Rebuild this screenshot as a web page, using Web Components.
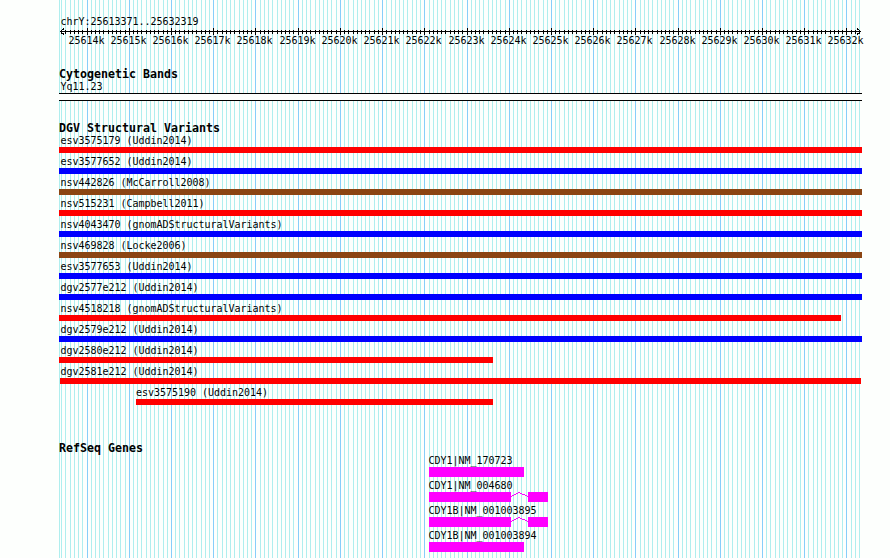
<!DOCTYPE html>
<html lang="en">
<head>
<meta charset="utf-8">
<title>chrY:25613371..25632319</title>
<style>
  body {
    margin: 0;
    background: #fdfffd;
  }
</style>
</head>
<body>
<genome-panel start="25613371" end="25632319">
  <scale-ruler start="25613371" end="25632319"></scale-ruler>
  <track-section heading="Cytogenetic Bands" style="--top: 21px">
    <cyto-band name="Yq11.23"></cyto-band>
  </track-section>
  <track-section heading="DGV Structural Variants" style="--top: 21px" id="variants"></track-section>
  <track-section heading="RefSeq Genes" style="--top: 34px" id="genes"></track-section>
</genome-panel>

<script>
  const PAD = 60;
  const WIDTH = 800;
  const SVG_NS = "http://www.w3.org/2000/svg";

  // base position -> pixel column of the panel
  function toPixel(pos, start, end) {
    return Math.round(PAD + (pos - start) * WIDTH / (end - start + 1));
  }

  function addRect(svg, x, y, width, height, fill) {
    const rect = document.createElementNS(SVG_NS, "rect");
    rect.setAttribute("x", x);
    rect.setAttribute("y", y);
    rect.setAttribute("width", width);
    rect.setAttribute("height", height);
    rect.setAttribute("fill", fill);
    svg.appendChild(rect);
  }

  class GenomePanel extends HTMLElement {
    constructor() {
      super();
      this.attachShadow({ mode: "open" });
    }

    connectedCallback() {
      this.shadowRoot.innerHTML = `
        <style>
          :host {
            display: block;
            position: relative;
            width: 890px;
            height: 558px;
            overflow: hidden;
            color: #000;
            font: 10px/12px "DejaVu Sans Mono", monospace;
            letter-spacing: -0.02px;
          }
          svg {
            position: absolute;
            inset: 0;
          }
          .tracks {
            position: relative;
            display: flex;
            flex-direction: column;
            padding: 16px 0 0 59px;
          }
        </style>
        <svg width="890" height="558" shape-rendering="crispEdges"></svg>
        <div class="tracks"><slot></slot></div>
      `;
      this.drawGrid(this.shadowRoot.querySelector("svg"));
    }

    drawGrid(svg) {
      const start = Number(this.getAttribute("start"));
      const end = Number(this.getAttribute("end"));
      addRect(svg, 59, 0, 1, 558, "#afeeee");
      for (let pos = Math.ceil(start / 100) * 100; pos <= end; pos += 100) {
        const major = pos % 1000 === 0;
        addRect(svg, toPixel(pos, start, end), 0, 1, 558, major ? "#87cefa" : "#afeeee");
      }
    }
  }

  class ScaleRuler extends HTMLElement {
    constructor() {
      super();
      this.attachShadow({ mode: "open" });
    }

    connectedCallback() {
      const start = Number(this.getAttribute("start"));
      const end = Number(this.getAttribute("end"));
      this.shadowRoot.innerHTML = `
        <style>
          :host {
            display: block;
            height: 31px;
          }
          .range {
            height: 11px;
            padding-left: 1.5px;
          }
          svg {
            display: block;
          }
          .labels {
            position: relative;
            margin-top: -1px;
          }
          .labels span {
            position: absolute;
            top: 0;
            white-space: pre;
          }
        </style>
        <div class="range">chrY:${start}..${end}</div>
        <svg width="804" height="9" shape-rendering="crispEdges">
          <path d="M1 4.5H802M5 1.5L1.5 4.5L5 7.5M798 1.5L801.5 4.5L798 7.5" fill="none" stroke="#000"/>
        </svg>
        <div class="labels"></div>
      `;
      const svg = this.shadowRoot.querySelector("svg");
      const labels = this.shadowRoot.querySelector(".labels");
      for (let pos = Math.ceil(start / 100) * 100; pos <= end; pos += 100) {
        const x = toPixel(pos, start, end) - 59;
        if (pos % 1000 === 0) {
          addRect(svg, x, 1, 1, 7, "#000");
          const label = document.createElement("span");
          label.textContent = pos / 1000 + "k";
          label.style.left = x - 18.5 + "px";
          labels.appendChild(label);
        } else {
          addRect(svg, x, 3, 1, 4, "#000");
        }
      }
    }
  }

  class TrackSection extends HTMLElement {
    constructor() {
      super();
      this.attachShadow({ mode: "open" });
    }

    connectedCallback() {
      this.shadowRoot.innerHTML = `
        <style>
          :host {
            display: block;
            margin-top: var(--top);
          }
          h2 {
            margin: 0 0 1px;
            height: 12px;
            font: bold 11.63px/12px "DejaVu Sans Mono", monospace;
            letter-spacing: 0;
          }
        </style>
        <h2>${this.getAttribute("heading")}</h2>
        <slot></slot>
      `;
    }
  }

  class CytoBand extends HTMLElement {
    constructor() {
      super();
      this.attachShadow({ mode: "open" });
    }

    connectedCallback() {
      this.shadowRoot.innerHTML = `
        <style>
          :host {
            display: block;
            width: 803px;
          }
          .name {
            height: 12px;
            padding-left: 1.5px;
          }
          .band {
            box-sizing: border-box;
            height: 8px;
            border: solid #000;
            border-width: 1px 0;
            background: #fdfffd;
          }
        </style>
        <div class="name">${this.getAttribute("name")}</div>
        <div class="band"></div>
      `;
    }
  }

  class VariantBar extends HTMLElement {
    constructor() {
      super();
      this.attachShadow({ mode: "open" });
    }

    connectedCallback() {
      const from = Number(this.getAttribute("from"));
      const to = Number(this.getAttribute("to"));
      this.shadowRoot.innerHTML = `
        <style>
          :host {
            display: block;
            height: 21px;
            margin-left: ${from - 59}px;
          }
          .name {
            height: 12px;
            padding-left: ${from === 59 ? 1.5 : from === 60 ? 0.5 : 0}px;
            white-space: nowrap;
          }
          .bar {
            width: ${to - from}px;
            height: 6px;
            background: ${this.getAttribute("color")};
          }
        </style>
        <div class="name"><slot></slot></div>
        <div class="bar"></div>
      `;
    }
  }

  class GeneModel extends HTMLElement {
    constructor() {
      super();
      this.attachShadow({ mode: "open" });
    }

    connectedCallback() {
      const spliced = this.hasAttribute("spliced");
      this.shadowRoot.innerHTML = `
        <style>
          :host {
            display: block;
            height: 25px;
            margin-left: 370px;
          }
          .name {
            height: 12px;
            margin-left: -0.5px;
            white-space: nowrap;
          }
          .model {
            display: flex;
          }
          .exon {
            height: 10px;
            background: #f0f;
          }
        </style>
        <div class="name"><slot></slot></div>
        <div class="model">
          ${spliced ? `
            <div class="exon" style="width: 82px"></div>
            <svg width="17" height="10" shape-rendering="crispEdges">
              <path d="M0 4.5L8 0.5L17 4.5" fill="none" stroke="#f0f"/>
            </svg>
            <div class="exon" style="width: 20px"></div>
          ` : `<div class="exon" style="width: 95px"></div>`}
        </div>
      `;
    }
  }

  const variants = [
    ["esv3575179 (Uddin2014)", "#f00", 59, 862],
    ["esv3577652 (Uddin2014)", "#00f", 59, 862],
    ["nsv442826 (McCarroll2008)", "#8b4513", 59, 862],
    ["nsv515231 (Campbell2011)", "#f00", 59, 862],
    ["nsv4043470 (gnomADStructuralVariants)", "#00f", 59, 862],
    ["nsv469828 (Locke2006)", "#8b4513", 59, 862],
    ["esv3577653 (Uddin2014)", "#00f", 59, 862],
    ["dgv2577e212 (Uddin2014)", "#00f", 59, 862],
    ["nsv4518218 (gnomADStructuralVariants)", "#f00", 59, 841],
    ["dgv2579e212 (Uddin2014)", "#00f", 59, 862],
    ["dgv2580e212 (Uddin2014)", "#f00", 59, 493],
    ["dgv2581e212 (Uddin2014)", "#f00", 60, 861],
    ["esv3575190 (Uddin2014)", "#f00", 136, 493],
  ];

  const genes = [
    ["CDY1|NM_170723", false],
    ["CDY1|NM_004680", true],
    ["CDY1B|NM_001003895", true],
    ["CDY1B|NM_001003894", false],
  ];

  for (const [name, color, from, to] of variants) {
    const bar = document.createElement("variant-bar");
    bar.textContent = name;
    bar.setAttribute("color", color);
    bar.setAttribute("from", from);
    bar.setAttribute("to", to);
    document.getElementById("variants").appendChild(bar);
  }

  for (const [name, spliced] of genes) {
    const gene = document.createElement("gene-model");
    gene.textContent = name;
    gene.toggleAttribute("spliced", spliced);
    document.getElementById("genes").appendChild(gene);
  }

  customElements.define("genome-panel", GenomePanel);
  customElements.define("scale-ruler", ScaleRuler);
  customElements.define("track-section", TrackSection);
  customElements.define("cyto-band", CytoBand);
  customElements.define("variant-bar", VariantBar);
  customElements.define("gene-model", GeneModel);
</script>
</body>
</html>
